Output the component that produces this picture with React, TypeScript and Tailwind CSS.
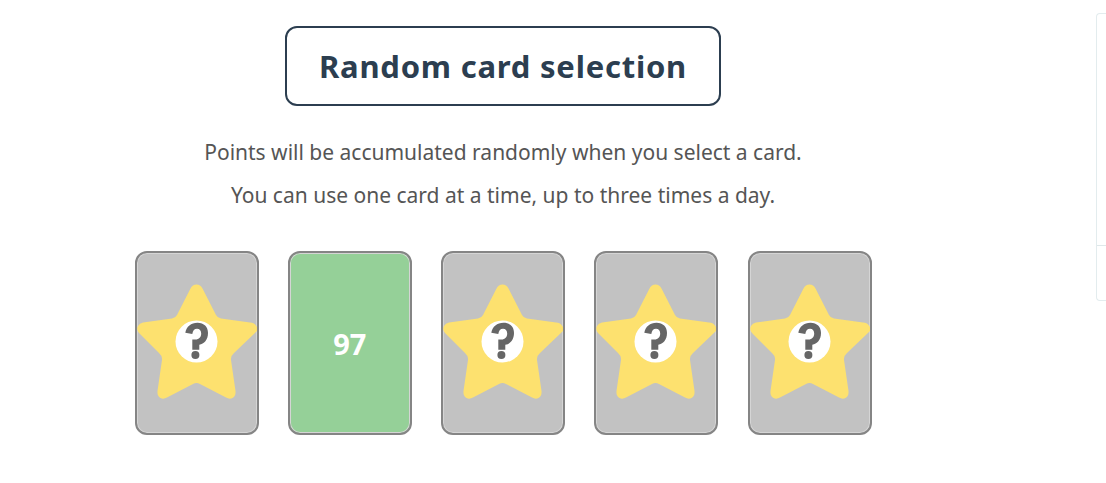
import clsx from "clsx";

type Card = {
	id: number;
	points?: number;
};

const cards: Card[] = [
	{ id: 1 },
	{ id: 2, points: 97 },
	{ id: 3 },
	{ id: 4 },
	{ id: 5 },
];

const StarIcon = () => {
	return (
		<svg viewBox="0 0 120 180" className="h-full w-full" aria-hidden="true">
			<path
				d="M53.5 35.5Q55.5 31.5 59.5 31.5Q63.5 31.5 65.5 35.5L79 62Q80.5 65 84 65.5L113 69.5Q117 69.5 118.5 72L120 74V78L97 100Q93.5 103 94 107L98.5 138Q99 143 95.5 145Q92.5 146.5 89 144.5L63 131Q59.5 129 56 131L30 144.5Q26.5 146.5 23.5 145Q20 143 20.5 138L25 107Q25.5 103 22 100L2 80Q-1 76.5 1 73Q2.5 70 6 69.5L35 65.5Q38.5 65 40 62Z"
				fill="#fde16f"
			/>
			<circle cx="59.5" cy="88.5" r="21" fill="#fff" />
			<path
				d="M48.3 79.8C49.5 73.5 54 69.8 60.5 69.8C67 69.8 71 74 71 80C71 87 67 91 62.3 91.8V96.7H55.3V86.5H58.5C62 86.5 64.2 84 64.2 80.5C64.2 77.5 62.5 75.8 60 75.8C57.3 75.8 55.9 77.5 55.3 81Z"
				fill="#666"
			/>
			<circle cx="58.4" cy="102" r="4" fill="#666" />
		</svg>
	);
};

const CardButton = ({ card }: { card: Card }) => {
	const opened = card.points !== undefined;
	return (
		<button
			type="button"
			aria-label={opened ? undefined : `Card ${card.id}`}
			className={clsx(
				"h-46 w-31 overflow-hidden rounded-xl border-2 border-[#858585] text-[29px] font-bold text-white shadow-[inset_0_0_0_1px_#d5d5d5]",
				opened ? "bg-[#95d098] pt-0.5" : "bg-[#c2c2c2]",
			)}
		>
			{opened ? card.points : <StarIcon />}
		</button>
	);
};

export default function App() {
	return (
		<div className="flex items-start bg-white font-['Noto_Sans','Open_Sans',sans-serif]">
			<main className="flex flex-1 flex-col items-center pt-[26px]">
				<h1 className="rounded-xl border-2 border-[#2c3e50] px-8 py-4 text-[31px] leading-[44px] font-bold tracking-wide text-[#2c3e50]">
					Random card selection
				</h1>
				<div className="mt-[25px] text-center text-[21px] leading-[43px] text-[#555]">
					<p>Points will be accumulated randomly when you select a card.</p>
					<p>You can use one card at a time, up to three times a day.</p>
				</div>
				<div className="mt-[34px] flex w-full max-w-[737px] justify-between">
					{cards.map((card) => (
						<CardButton key={card.id} card={card} />
					))}
				</div>
			</main>
			<aside className="mt-[13px] ml-[90px] w-[10px] rounded-l border border-r-0 border-[#e3ecee]">
				<div className="h-[231px]" />
				<div className="h-[55px] border-t border-[#dfe8ea]" />
			</aside>
		</div>
	);
}
